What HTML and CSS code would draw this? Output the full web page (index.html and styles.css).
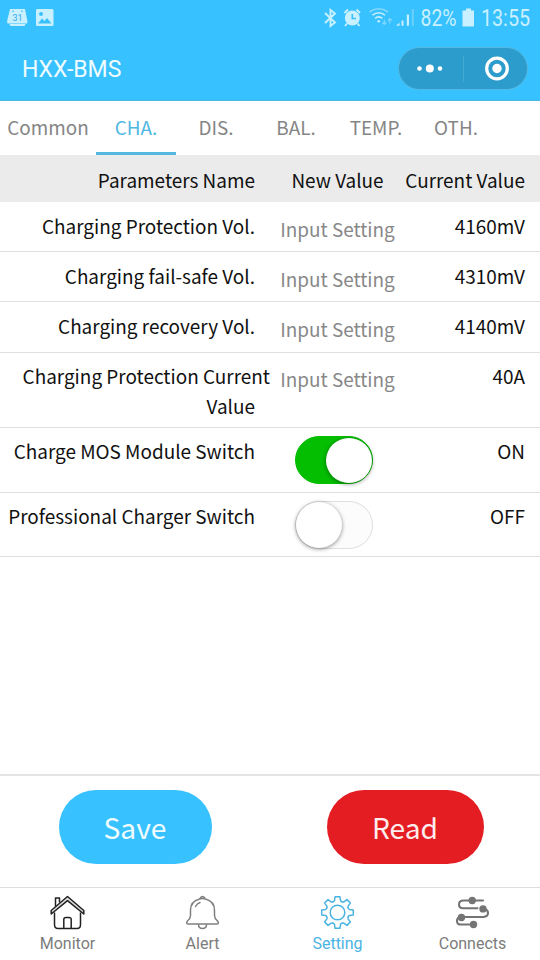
FILE: index.html
```html
<!DOCTYPE html>
<html lang="en">
<head>
<meta charset="utf-8">
<title>HXX-BMS</title>
<link rel="stylesheet" href="styles.css">
</head>
<body>
<div class="app">
  <header class="top">
    <div class="status">
      <svg width="540" height="36" viewBox="0 0 540 36">
        <g fill="#c8f0ff">
          <path d="M10 9H25L27.500 21.500 27 23.500H7.500L7 21.500ZM9.500 24H25.500L24.500 26H10.500Z"/>
          <path fill-rule="evenodd" d="M37 9H52Q53.500 9 53.500 10.500V24.500Q53.500 26 52 26H37.500Q36 26 36 24.500V10.500Q36 9 37 9ZM38 23.500H51.500L47 18 44.500 21 42 18.500ZM41 12A2 2 0 1 0 41 16A2 2 0 1 0 41 12Z"/>
          <circle cx="352.300" cy="18" r="7.500"/>
          <circle cx="378.700" cy="21.300" r="1.300"/>
          <path d="M396 25.800L399.500 22.800V25.800ZM401.500 20.500H403.500V25.800H401.500ZM406.800 14.500H409V25.800H406.800Z"/>
          <path d="M411.800 9H413.800V25.800H411.800Z" opacity=".35"/>
          <path d="M466 8.500H471V10.500H474V26.500H462.500V10.500H466Z"/>
        </g>
        <g fill="none" stroke="#c8f0ff" stroke-width="1.900">
          <path d="M325 13L335 22.500 330.500 26V10L335 13.500 325 23"/>
          <path d="M344.500 13L348 9.500M360 13L356.500 9.500M347 23.500L345 26M357.500 23.500L359.500 26"/>
          <path d="M375 18.300Q378.700 15.500 382.400 18.300M372.500 15.200Q378.700 10.200 385 15.200" stroke-width="1.600"/>
          <path d="M369.500 12Q378.700 5.500 388 12" stroke-width="1.600" opacity=".5"/>
          <path d="M384.300 19.500V24.500M382.300 22.500L384.300 24.500 386.300 22.500M389.800 23.500V18.500M387.900 20.500L389.800 18.500 391.700 20.500" stroke-width="1.200" opacity=".5"/>
        </g>
        <path d="M352.300 14V18.500H356" fill="none" stroke="#38c1ff" stroke-width="1.600"/>
        <g fill="#38c1ff"><circle cx="13" cy="11.300" r=".8"/><circle cx="22" cy="11.300" r=".8"/></g>
        <text class="cal" x="17.500" y="21">31</text>
        <text class="clock" x="420.500" y="26" textLength="36" lengthAdjust="spacingAndGlyphs">82%</text>
        <text class="clock" x="481" y="26" textLength="49" lengthAdjust="spacingAndGlyphs">13:55</text>
      </svg>
    </div>
    <div class="titlebar">
      <h1>HXX-BMS</h1>
      <div class="capsule">
        <svg width="64" height="42" viewBox="0 0 64 42"><g fill="#fff"><circle cx="20.500" cy="20.500" r="2.300"/><circle cx="30.800" cy="20.500" r="4"/><circle cx="41" cy="20.500" r="2.300"/></g></svg>
        <i></i>
        <svg width="63" height="42" viewBox="0 0 63 42"><circle cx="33" cy="20.500" r="10.300" fill="none" stroke="#fff" stroke-width="3.200"/><circle cx="33" cy="20.500" r="4.700" fill="#fff"/></svg>
      </div>
    </div>
  </header>
  <nav class="tabs">
    <span>Common</span><span class="active">CHA.</span><span>DIS.</span><span>BAL.</span><span>TEMP.</span><span>OTH.</span>
  </nav>
  <section class="table">
    <div class="row head"><div class="name">Parameters Name</div><div class="new">New Value</div><div class="cur">Current Value</div></div>
    <div class="row"><div class="name">Charging Protection Vol.</div><div class="new input">Input Setting</div><div class="cur">4160mV</div></div>
    <div class="row"><div class="name">Charging fail-safe Vol.</div><div class="new input">Input Setting</div><div class="cur">4310mV</div></div>
    <div class="row r3"><div class="name">Charging recovery Vol.</div><div class="new input">Input Setting</div><div class="cur">4140mV</div></div>
    <div class="row tall"><div class="name"><span class="wide">Charging Protection Current</span><br>Value</div><div class="new input">Input Setting</div><div class="cur">40A</div></div>
    <div class="row sw"><div class="name">Charge MOS Module Switch</div><div class="new"><div class="switch on"><b></b></div></div><div class="cur">ON</div></div>
    <div class="row sw last"><div class="name">Professional Charger Switch</div><div class="new"><div class="switch"><b></b></div></div><div class="cur">OFF</div></div>
  </section>
  <section class="actions">
    <div class="btn save">Save</div>
    <div class="btn read">Read</div>
  </section>
  <footer class="tabbar">
    <div class="item">
      <svg width="40" height="40" viewBox="-19.500 -20.500 40 40" fill="none" stroke="#222" stroke-width="1.500" stroke-linejoin="round">
        <path d="M-13 0V12Q-13 16-9.500 16H9.500Q13 16 13 12V0M-12 -6V-14.500H-8V-10"/>
        <path d="M0 -16L-16.300 -2V1.500L0 -11.800 16.300 1.500V-2Z" fill="#ddd"/>
        <path d="M-3.700 16V7Q-3.700 5-1.500 5H1.500Q3.700 5 3.700 7V16"/>
      </svg>
      <span>Monitor</span>
    </div>
    <div class="item">
      <svg width="40" height="40" viewBox="-19.500 -20.500 40 40" fill="none" stroke="#808080" stroke-width="1.500" stroke-linecap="round" stroke-linejoin="round">
        <path d="M-3 -13.500C-9 -12-12 -8-12 -2V3Q-12 6-15 8.500Q-17 11.500-14.500 11.500H14.500Q17 11.500 15 8.500Q12 6 12 3V-2C12 -8 9 -12 3 -13.500Q0 -14.500-3 -13.500ZM-2.500 -14Q0 -18 2.500 -14M-4 12Q-4 16 0 16T4 12M-7 -6Q-5.500 -9-2.500 -10"/>
      </svg>
      <span>Alert</span>
    </div>
    <div class="item on">
      <svg width="40" height="40" viewBox="-19.500 -20.500 40 40" fill="none" stroke="#4bb3e2" stroke-width="1.500" stroke-linejoin="round" stroke-linecap="round">
        <defs><path id="tooth" d="M-4.440 -10.700Q-3.200 -11.200-3 -12L-2.400 -15.800H2.400L3 -12Q3.200 -11.200 4.440 -10.700"/></defs>
        <use href="#tooth"/><use href="#tooth" transform="rotate(45)"/><use href="#tooth" transform="rotate(90)"/><use href="#tooth" transform="rotate(135)"/><use href="#tooth" transform="rotate(180)"/><use href="#tooth" transform="rotate(225)"/><use href="#tooth" transform="rotate(270)"/><use href="#tooth" transform="rotate(315)"/>
        <circle r="7.300"/>
      </svg>
      <span>Setting</span>
    </div>
    <div class="item">
      <svg width="40" height="40" viewBox="-19.500 -20.500 40 40" fill="none" stroke="#747474" stroke-width="2.100" stroke-linecap="round">
        <path d="M10.500 -12H-9Q-13.500 -12-13.500 -8T-9 -4.300H5M11 -3.800Q15.500 -3 15.500 0.500T11 4.500H-11Q-15.500 4.500-15.500 8.500T-11 12H0"/>
        <g fill="#747474" stroke="none"><circle cx="-.300" cy="-12" r="3.700"/><circle cx="10.500" cy="-3.600" r="3.700"/><circle cx="-11" cy="5" r="3.700"/><circle cx="1" cy="12" r="3.700"/></g>
      </svg>
      <span>Connects</span>
    </div>
  </footer>
</div>
</body>
</html>
```
FILE: styles.css
```css
* { box-sizing: border-box; }
body { margin: 0; background: #fff; font-family: "Noto Sans CJK SC", "Noto Sans", sans-serif; color: #111; }
.app { width: 540px; height: 960px; display: flex; flex-direction: column; overflow: hidden; }
svg { display: block; }

.top { height: 101px; background: #38c1ff; border-bottom: 1px solid #4ab8e6; }
.status { height: 36px; }
.cal { font: 9px Roboto, sans-serif; fill: #38a9df; text-anchor: middle; }
.clock { font: 23px Roboto, sans-serif; fill: #c8f0ff; }
.titlebar { display: flex; justify-content: space-between; align-items: center; height: 65px; padding: 0 12px 0 22px; }
h1 { margin: 2px 0 0; font: 400 23px Roboto, sans-serif; color: #effcff; }
.capsule { display: flex; align-items: center; width: 130px; height: 43px; border-radius: 22px; background: #2b9ccb; border: 1px solid #55b8e0; }
.capsule i { width: 1px; height: 26px; background: #45a9d2; }

.tabs { display: flex; height: 54px; flex: none; }
.tabs span { width: 80px; text-align: center; font-size: 18.900px; line-height: 52px; height: 54px; color: #858585; }
.tabs span:first-child { width: 96px; }
.tabs .active { color: #4fb8e2; border-bottom: 3px solid #55b8e0; }

.row { display: flex; height: 50px; padding-top: 9px; border-bottom: 1px solid #e0e0e0; font-size: 18.950px; line-height: 29.500px; }
.name { width: 255px; text-align: right; white-space: nowrap; }
.new { width: 150px; padding-left: 15px; text-align: center; }
.cur { width: 120px; text-align: right; white-space: nowrap; }
.head { height: 47px; background: #ebebeb; border: 0; padding-top: 10px; }
.input { padding-top: 3px; color: #888; }
.r3 { height: 51px; }
.tall { height: 75px; padding-top: 8px; }
.wide { margin-right: -15px; }
.sw { height: 65px; padding-top: 8px; }
.last { height: 64px; }
.switch { width: 78px; height: 48px; margin-left: 25px; padding: 1px; border-radius: 24px; background: #fcfcfc; border: 1px solid #dfdfdf; }
.switch b { display: block; width: 46px; height: 46px; margin: -1px; border-radius: 50%; background: #fff; box-shadow: 0 1px 4px rgba(0,0,0,.45); }
.switch.on { background: #04be02; border-color: #04be02; }
.switch.on b { margin: 0 0 0 29px; height: 45px; }

.actions { margin-top: auto; height: 113px; flex: none; border-top: 2px solid #e4e4e4; display: flex; padding-top: 14px; }
.btn { height: 74px; border-radius: 37px; font-size: 28.200px; line-height: 74px; text-align: center; color: #effcff; }
.save { width: 153px; margin-left: 58.500px; background: #38c1ff; }
.read { width: 157px; margin-left: 115px; background: #e41d23; color: #ffecec; }

.tabbar { display: flex; height: 73px; flex: none; border-top: 1px solid #dedede; }
.item { width: 135px; display: flex; flex-direction: column; align-items: center; padding-top: 4px; font: 16px Roboto, sans-serif; color: #7c7c7c; }
.item span { line-height: 20px; margin-top: 2px; }
.item.on { color: #4bb3e2; }
```
